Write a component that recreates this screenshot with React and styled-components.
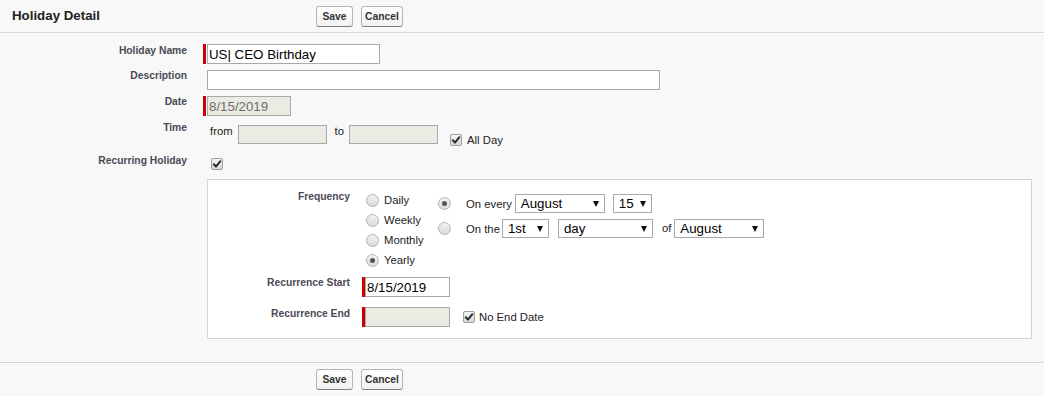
import React from 'react';
import styled, { createGlobalStyle } from 'styled-components';

const Global = createGlobalStyle`
  html, body { margin: 0; padding: 0; background: #f8f8f8; }
  body { font-family: "Liberation Sans", Arial, sans-serif; color: #000; }
  * { box-sizing: border-box; }
`;

const Page = styled.div`
  width: 1044px;
  height: 396px;
  background: #f8f8f8;
  overflow: hidden;
  display: flex;
  flex-direction: column;
`;

const Bar = styled.div`
  display: grid;
  grid-template-columns: 316px 1fr;
  align-items: ${p => (p.$footer ? 'start' : 'center')};
  height: ${p => (p.$footer ? '34px' : '33px')};
  padding-top: ${p => (p.$footer ? '6px' : '0')};
  border-bottom: ${p => (p.$footer ? 'none' : '1px solid #d6d6d6')};
  border-top: ${p => (p.$footer ? '1px solid #d6d6d6' : 'none')};
  box-shadow: ${p => (p.$footer ? 'inset 0 1px 0 #fff' : '0 1px 0 #fff')};
`;

const Title = styled.h2`
  margin: 0 0 2px 0;
  padding-left: 12px;
  font-size: 13.3px;
  font-weight: bold;
  color: #222;
`;

const Buttons = styled.div`
  display: flex;
  gap: 8px;
`;

const Button = styled.button`
  font-family: "Liberation Sans", Arial, sans-serif;
  font-size: 10.3px;
  font-weight: bold;
  color: #333;
  height: 21px;
  min-width: 37px;
  padding: 0 3px;
  border: 1px solid #b5b5b5;
  border-bottom-color: #7f7f7f;
  border-radius: 3px;
  background: linear-gradient(#ffffff, #f1f1f1);
  cursor: pointer;
`;

const Content = styled.div`
  padding: 11px 0 23px 0;
`;

const FormRow = styled.div`
  display: grid;
  grid-template-columns: ${p => p.$labelWidth || 203}px 1fr;
  height: ${p => (p.$h ? `${p.$h}px` : 'auto')};
  margin-top: ${p => p.$mt || 0}px;
`;

const Label = styled.div`
  text-align: right;
  padding-right: ${p => p.$pr ?? 16}px;
  padding-top: ${p => p.$pt || 0}px;
  font-size: 10.3px;
  font-weight: bold;
  color: #4a4a56;
`;

const Field = styled.div`
  display: flex;
  align-items: flex-start;
  padding-top: ${p => p.$pt || 0}px;
  padding-left: ${p => p.$pl || 0}px;
  font-size: 11.3px;
  color: #222;
`;

const Required = styled.div`
  display: flex;
  align-items: stretch;
  &::before {
    content: '';
    width: 3px;
    margin-right: ${p => p.$gap ?? 1}px;
    background: #c00;
  }
`;

const TextInput = styled.input`
  font-family: "Liberation Sans", Arial, sans-serif;
  font-size: 13.3px;
  color: ${p => (p.disabled ? '#6d6d6d' : '#000')};
  width: ${p => p.$w}px;
  height: ${p => p.$h || 20}px;
  margin-left: ${p => p.$ml || 0}px;
  padding: 0 1px;
  border: 1px solid #a9a9a9;
  border-radius: 0;
  background: ${p => (p.disabled ? '#ebebe4' : '#fff')};
  outline: none;
`;

const Text = styled.span`
  margin: 0 ${p => p.$mr || 0}px 0 ${p => p.$ml || 0}px;
  line-height: 13px;
  font-size: ${p => p.$fs || 11.3}px;
  color: #222;
  white-space: nowrap;
`;

const CheckGroup = styled.label`
  display: flex;
  align-items: center;
  gap: ${p => p.$gap ?? 5}px;
  align-self: center;
  margin-left: ${p => p.$ml || 0}px;
  font-size: 11.3px;
  color: #222;
`;

const Box = styled.span`
  width: 12px;
  height: 12px;
  border: 1px solid #9d9d9d;
  border-radius: 2px;
  background: linear-gradient(#f4f4f4, #d9d9d9);
  display: flex;
  align-items: center;
  justify-content: center;
`;

const Check = () => (
  <Box>
    <svg width="10" height="10" viewBox="0 0 10 10">
      <path d="M1.8 5.2 L4 7.6 L8.4 2.2" fill="none" stroke="#2b2b2b" strokeWidth="2" strokeLinecap="round" strokeLinejoin="round" />
    </svg>
  </Box>
);

const Radio = styled.span`
  width: 13px;
  height: 13px;
  flex: none;
  border-radius: 50%;
  border: 1px solid #b3b3b3;
  background: linear-gradient(#f3f3f3, #dadada);
  margin-right: ${p => p.$mr || 5}px;
  display: flex;
  align-items: center;
  justify-content: center;
  &::after {
    content: '';
    width: 5px;
    height: 5px;
    border-radius: 50%;
    background: ${p => (p.$on ? '#555' : 'transparent')};
  }
`;

const Panel = styled.div`
  margin: 0 12px 0 4px;
  height: 160px;
  background: #fff;
  border: 1px solid #d4d4d4;
  padding-top: 10px;
`;

const RadioList = styled.div`
  width: 72px;
  display: flex;
  flex-direction: column;
`;

const RadioItem = styled.div`
  height: 20px;
  display: flex;
  align-items: center;
  font-size: 11.3px;
  color: #222;
`;

const Options = styled.div`
  padding-top: 4px;
  display: flex;
  flex-direction: column;
  gap: 6px;
`;

const OptionRow = styled.div`
  height: 19px;
  display: flex;
  align-items: center;
  font-size: 11.3px;
  color: #222;
`;

const Select = styled.div`
  width: ${p => p.$w}px;
  height: 19px;
  margin-left: ${p => p.$ml || 0}px;
  border: 1px solid #a9a9a9;
  background: #fff;
  display: flex;
  align-items: center;
  justify-content: space-between;
  padding: 0 5px 0 5px;
  font-size: 13.3px;
  color: #000;
`;

const Arrow = styled.span`
  width: 0;
  height: 0;
  border-left: 3.5px solid transparent;
  border-right: 3.5px solid transparent;
  border-top: 6px solid #111;
`;

const Sel = ({ w, ml, children }) => (
  <Select $w={w} $ml={ml}>
    <span>{children}</span>
    <Arrow />
  </Select>
);

export default function App() {
  return (
    <Page>
      <Global />
      <Bar>
        <Title>Holiday Detail</Title>
        <Buttons>
          <Button>Save</Button>
          <Button>Cancel</Button>
        </Buttons>
      </Bar>

      <Content>
        <FormRow $h={26}>
          <Label $pt={1}>Holiday Name</Label>
          <Field>
            <Required>
              <TextInput $w={173} defaultValue="US| CEO Birthday" readOnly />
            </Required>
          </Field>
        </FormRow>
        <FormRow $h={26}>
          <Label>Description</Label>
          <Field>
            <TextInput $w={453} $ml={4} defaultValue="" readOnly />
          </Field>
        </FormRow>
        <FormRow $h={26}>
          <Label>Date</Label>
          <Field>
            <Required>
              <TextInput $w={84} disabled defaultValue="8/15/2019" />
            </Required>
          </Field>
        </FormRow>
        <FormRow $h={33}>
          <Label>Time</Label>
          <Field $pt={3} $pl={7}>
            <Text $mr={5}>from</Text>
            <TextInput $w={89} $h={19} disabled />
            <Text $ml={8} $mr={5}>to</Text>
            <TextInput $w={89} $h={19} disabled />
            <CheckGroup $ml={12}>
              <Check />
              All Day
            </CheckGroup>
          </Field>
        </FormRow>
        <FormRow $h={24}>
          <Label>Recurring Holiday</Label>
          <Field $pt={3} $pl={8}>
            <Check />
          </Field>
        </FormRow>
        <FormRow>
          <div />
          <Panel>
            <FormRow $labelWidth={154} $h={80}>
              <Label $pr={12} $pt={1}>Frequency</Label>
              <Field $pl={4}>
                <RadioList>
                  <RadioItem><Radio />Daily</RadioItem>
                  <RadioItem><Radio />Weekly</RadioItem>
                  <RadioItem><Radio />Monthly</RadioItem>
                  <RadioItem><Radio $on />Yearly</RadioItem>
                </RadioList>
                <Options>
                  <OptionRow>
                    <Radio $on $mr={15} />
                    On every
                    <Sel w={90} ml={3}>August</Sel>
                    <Sel w={39} ml={8}>15</Sel>
                  </OptionRow>
                  <OptionRow>
                    <Radio $mr={15} />
                    On the
                    <Sel w={47} ml={2}>1st</Sel>
                    <Sel w={95} ml={9}>day</Sel>
                    <Text $ml={9} $mr={3}>of</Text>
                    <Sel w={90}>August</Sel>
                  </OptionRow>
                </Options>
              </Field>
            </FormRow>
            <FormRow $labelWidth={154} $h={30} $mt={7}>
              <Label $pr={12}>Recurrence Start</Label>
              <Field>
                <Required $gap={0}>
                  <TextInput $w={85} defaultValue="8/15/2019" readOnly />
                </Required>
              </Field>
            </FormRow>
            <FormRow $labelWidth={154} $h={20}>
              <Label $pr={12} $pt={1}>Recurrence End</Label>
              <Field>
                <Required $gap={0}>
                  <TextInput $w={85} $h={20} disabled />
                </Required>
                <CheckGroup $ml={13} $gap={4}>
                  <Check />
                  No End Date
                </CheckGroup>
              </Field>
            </FormRow>
          </Panel>
        </FormRow>
      </Content>

      <Bar $footer>
        <div />
        <Buttons>
          <Button>Save</Button>
          <Button>Cancel</Button>
        </Buttons>
      </Bar>
    </Page>
  );
}
